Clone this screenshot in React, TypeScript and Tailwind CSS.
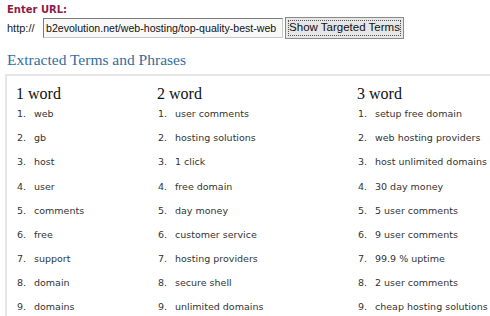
const columns = [
  {
    title: '1 word',
    width: 'w-[141px]',
    items: ['web', 'gb', 'host', 'user', 'comments', 'free', 'support', 'domain', 'domains'],
  },
  {
    title: '2 word',
    width: 'w-[200px]',
    items: [
      'user comments',
      'hosting solutions',
      '1 click',
      'free domain',
      'day money',
      'customer service',
      'hosting providers',
      'secure shell',
      'unlimited domains',
    ],
  },
  {
    title: '3 word',
    width: 'flex-1',
    items: [
      'setup free domain',
      'web hosting providers',
      'host unlimited domains',
      '30 day money',
      '5 user comments',
      '9 user comments',
      '99.9 % uptime',
      '2 user comments',
      'cheap hosting solutions',
    ],
  },
];

export default function App() {
  return (
    <div className="w-[490px] h-[316px] overflow-hidden bg-white">
      <div className="px-[7px] pt-[3px]">
        <div className="text-[10px] leading-[13px] font-bold text-[#8c1c44] font-['DejaVu_Sans',sans-serif]">
          Enter URL:
        </div>
        <div className="flex items-center mt-[1px] h-[22px]">
          <span className="text-[11px] text-[#222] font-['Liberation_Sans',Arial,sans-serif] w-[36px]">
            http://
          </span>
          <div className="w-[240px] h-[20px] border border-t-[#7a7a7a] border-l-[#7a7a7a] border-r-[#c8c8c8] border-b-[#c8c8c8] bg-[#f8f8f8] overflow-hidden whitespace-nowrap pl-[2px] text-[10.6px] leading-[18px] text-[#111] font-['Liberation_Sans',Arial,sans-serif]">
            b2evolution.net/web-hosting/top-quality-best-web
          </div>
          <div className="ml-[2px] h-[22px] w-[119px] border border-[#8a8a8a] bg-[#e6e6e6] p-[2px]">
            <div className="h-full border border-dotted border-[#555] flex items-center justify-center whitespace-nowrap text-[11.5px] text-[#111] font-['Liberation_Sans',Arial,sans-serif]">
              Show Targeted Terms
            </div>
          </div>
        </div>
        <h2 className="mt-[12px] text-[15.5px] leading-[18px] text-[#2f6e9f] font-['Liberation_Serif',Georgia,serif]">
          Extracted Terms and Phrases
        </h2>
      </div>
      <div className="ml-[5px] mt-[5px] border-t-2 border-l-2 border-[#e6e6e6] flex pl-[9px] pt-[8px]">
        {columns.map((col) => (
          <div key={col.title} className={col.width}>
            <div className="text-[16px] leading-[20px] text-[#111] font-['Liberation_Serif',Georgia,serif]">
              {col.title}
            </div>
            <ol className="-mt-[2px]">
              {col.items.map((item, i) => (
                <li
                  key={item}
                  className="flex h-[24.2px] items-center text-[9.5px] text-[#333] font-['DejaVu_Sans',Verdana,sans-serif]"
                >
                  <span className="w-[18px] pl-[1px]">{i + 1}.</span>
                  <span>{item}</span>
                </li>
              ))}
            </ol>
          </div>
        ))}
      </div>
    </div>
  );
}
